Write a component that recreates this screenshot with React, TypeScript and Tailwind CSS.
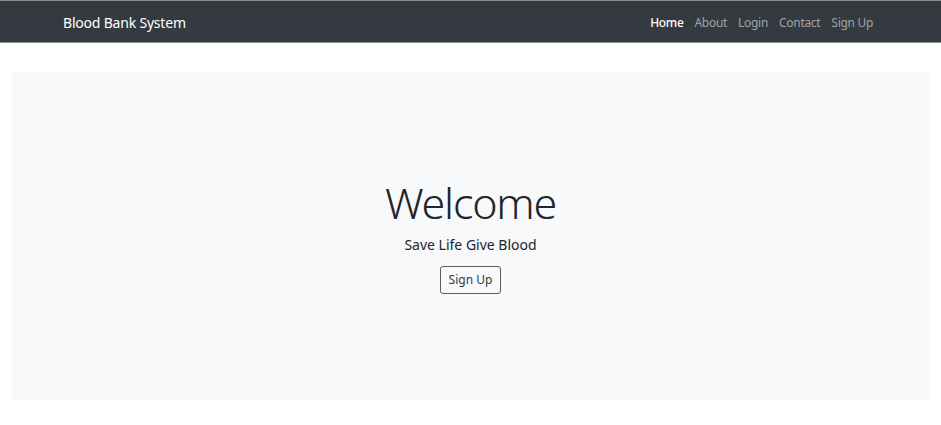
import React from 'react';

const links = ['Home', 'About', 'Login', 'Contact', 'Sign Up'];

export default function App() {
  return (
    <div className="min-h-[425px] bg-white font-['Noto_Sans',sans-serif]">
      {/* Navbar */}
      <nav className="h-[43px] bg-[#343a40] border-t border-b border-[#8a8d90] flex items-center justify-between pt-[2px] pl-[63px] pr-[68px]">
        <span className="text-white text-[14px] tracking-[-0.2px]">Blood Bank System</span>
        <div className="flex items-center gap-[11px]">
          {links.map((l, i) => (
            <span
              key={l}
              className={
                i === 0
                  ? 'text-white text-[12px] font-medium tracking-[-0.3px]'
                  : 'text-[#a0a3a6] text-[12px] tracking-[-0.3px]'
              }
            >
              {l}
            </span>
          ))}
        </div>
      </nav>

      {/* Jumbotron */}
      <section className="mt-[29px] mx-[12px] h-[328px] bg-[#f8f9fa] flex flex-col items-center justify-center text-[#212529]">
        <h1 className="text-[43px] font-light leading-none tracking-[-1.2px] mt-[3px]">Welcome</h1>
        <p className="text-[14px] mt-[12px] leading-tight">Save Life Give Blood</p>
        <button className="mt-[13px] h-[28px] px-[8px] border border-[#5a5d60] rounded-[3px] text-[12px] text-[#343a40] bg-transparent">
          Sign Up
        </button>
      </section>
    </div>
  );
}
